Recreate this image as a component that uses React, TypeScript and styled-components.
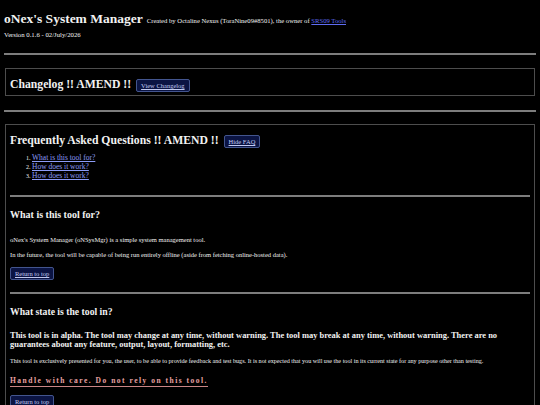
import React from 'react'
import styled, { createGlobalStyle } from 'styled-components'

const GlobalStyle = createGlobalStyle`
  body {
    margin: 0;
    background: #000000;
    color: #f2f2f2;
    font-family: "Liberation Serif", "Times New Roman", serif;
  }
`

const Page = styled.div`
  padding: 11px 4px 0;
`

const Header = styled.header`
  .header__title {
    display: flex;
    align-items: baseline;
    gap: 4px;
    line-height: 16px;
  }
  .header__version {
    margin-top: 1px;
    font-size: 6.75px;
    line-height: 9px;
  }
`

const Title = styled.h1`
  margin: 0;
  font-size: 13.5px;
  font-weight: bold;
`

const Credit = styled.span`
  font-size: 6.65px;
`

const Link = styled.a<{ $tone?: 'bright' | 'soft' }>`
  color: ${(p) => (p.$tone === 'bright' ? '#5f6cf2' : '#8d9cf6')};
  text-decoration: underline;
  cursor: pointer;
`

const Rule = styled.hr<{ $top: number; $bottom: number }>`
  border: none;
  height: 2px;
  background: #7d7d7d;
  margin: ${(p) => p.$top}px 0 ${(p) => p.$bottom}px;
`

const Box = styled.section`
  margin: 0 1px;
  border: 1px solid #4d4d4d;
  padding: 9px 4px 3px;
`

const HeadingRow = styled.div`
  display: flex;
  align-items: baseline;
  gap: 5px;
`

const BoxTitle = styled.h2`
  margin: 0;
  font-size: 11.7px;
  line-height: 14px;
  font-weight: bold;
`

const Button = styled.button`
  height: 13px;
  padding: 0 4px;
  background: #0b1443;
  border: 1px solid #43558e;
  border-radius: 2px;
  color: #c3cbf2;
  font-family: "Liberation Serif", "Times New Roman", serif;
  font-size: 6.5px;
  text-decoration: underline;
  cursor: pointer;
`

const ButtonLine = styled.div<{ $top: number }>`
  margin-top: ${(p) => p.$top}px;
  line-height: 0;
`

const Questions = styled.ol`
  margin: 5px 0 0;
  padding-left: 22px;
  font-size: 7.5px;
  line-height: 9px;

  li::marker {
    font-size: 6px;
  }
`

const Question = styled.h3<{ $size: number; $top: number }>`
  margin: ${(p) => p.$top}px 0 0;
  font-size: ${(p) => p.$size}px;
  line-height: 12px;
  font-weight: bold;
`

const Text = styled.p<{ $size: number; $top: number; $strong?: boolean }>`
  margin: ${(p) => p.$top}px 0 0;
  font-size: ${(p) => p.$size}px;
  line-height: ${(p) => (p.$strong ? 9 : 8)}px;
  font-weight: ${(p) => (p.$strong ? 'bold' : 'normal')};
`

const Warning = styled.div`
  display: inline-block;
  margin-top: 11px;
  padding-bottom: 1px;
  border-bottom: 1px solid #c98585;
  color: #e8a2a2;
  font-size: 7.5px;
  line-height: 9px;
  font-weight: bold;
  letter-spacing: 1.5px;
`

export default function App() {
  const faq = ['What is this tool for?', 'How does it work?', 'How does it work?']

  return (
    <Page>
      <GlobalStyle />
      <Header>
        <div className="header__title">
          <Title>oNex's System Manager</Title>
          <Credit>
            Created by Octaline Nexus (ToraNine09#8501), the owner of{' '}
            <Link $tone="bright">SRS09 Tools</Link>
          </Credit>
        </div>
        <div className="header__version">Version 0.1.6 - 02/July/2026</div>
      </Header>

      <Rule $top={14} $bottom={13} />

      <Box>
        <HeadingRow>
          <BoxTitle>Changelog !! AMEND !!</BoxTitle>
          <Button>View Changelog</Button>
        </HeadingRow>
      </Box>

      <Rule $top={14} $bottom={12} />

      <Box>
        <HeadingRow>
          <BoxTitle>Frequently Asked Questions !! AMEND !!</BoxTitle>
          <Button>Hide FAQ</Button>
        </HeadingRow>
        <Questions>
          {faq.map((q, i) => (
            <li key={i}>
              <Link>{q}</Link>
            </li>
          ))}
        </Questions>

        <Rule $top={15} $bottom={0} />

        <Question $size={10} $top={12}>
          What is this tool for?
        </Question>
        <Text $size={6.5} $top={15}>
          oNex's System Manager (oNSysMgr) is a simple system management tool.
        </Text>
        <Text $size={6.5} $top={7}>
          In the future, the tool will be capable of being run entirely offline (aside from fetching
          online-hosted data).
        </Text>
        <ButtonLine $top={8}>
          <Button>Return to top</Button>
        </ButtonLine>

        <Rule $top={12} $bottom={0} />

        <Question $size={9.7} $top={12}>
          What state is the tool in?
        </Question>
        <Text $size={8.45} $top={13} $strong>
          This tool is in alpha. The tool may change at any time, without warning. The tool may
          break at any time, without warning. There are no guarantees about any feature, output,
          layout, formatting, etc.
        </Text>
        <Text $size={6.15} $top={8}>
          This tool is exclusively presented for you, the user, to be able to provide feedback and
          test bugs. It is not expected that you will use the tool in its current state for any
          purpose other than testing.
        </Text>
        <Warning>Handle with care. Do not rely on this tool.</Warning>
        <ButtonLine $top={8}>
          <Button>Return to top</Button>
        </ButtonLine>
      </Box>
    </Page>
  )
}
